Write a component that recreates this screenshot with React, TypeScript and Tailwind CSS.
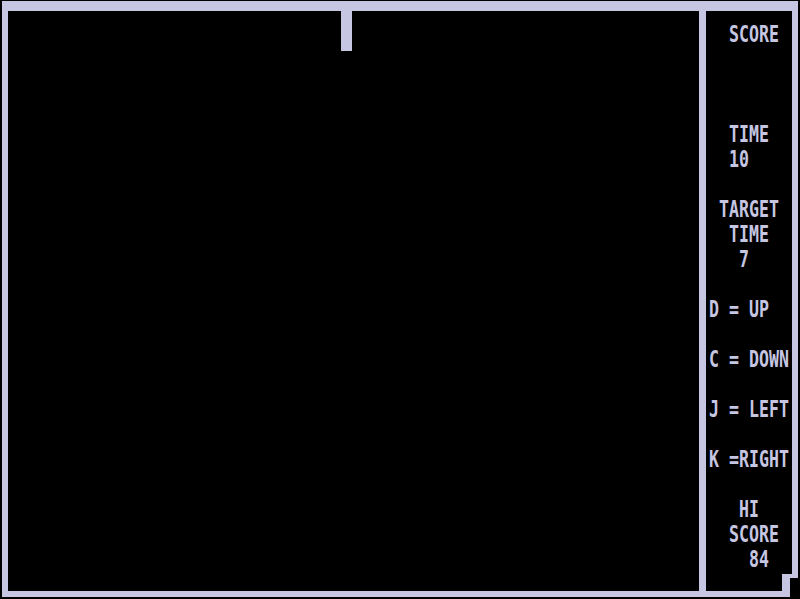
const INK = "bg-[#c6c6e2]";

// sidebar rows, index = text row (25px each), text starts at column 71
const SIDEBAR_ROWS: Record<number, string> = {
	1: "  SCORE",
	5: "  TIME",
	6: "  10",
	8: " TARGET",
	9: "  TIME",
	10: "   7",
	12: "D = UP",
	14: "C = DOWN",
	16: "J = LEFT",
	18: "K =RIGHT",
	20: "   HI",
	21: "  SCORE",
	22: "    84",
};

function Sidebar() {
	const rows = Array.from({ length: 22 }, (_, i) => SIDEBAR_ROWS[i + 1] ?? "");

	return (
		<div className="flex w-[92px] flex-col">
			<div className="flex flex-1">
				<div
					className="w-[86px] pl-[3px] pt-[13px] text-[16.6px] font-bold text-[#c6c6e2]"
					style={{ fontFamily: '"DejaVu Sans Mono", "Liberation Mono", monospace' }}
				>
					{rows.map((line, i) => (
						<div key={i} className="h-[25px] origin-top scale-y-[1.4] whitespace-pre leading-none">
							{line}
						</div>
					))}
				</div>
				<div className={`w-[6px] ${INK}`} />
			</div>

			{/* step in the bottom right corner */}
			<div className="flex h-[6px]">
				<div className="w-[76px]" />
				<div className={`w-[16px] ${INK}`} />
			</div>
			<div className="flex h-[17px]">
				<div className="w-[76px]" />
				<div className={`w-[8px] ${INK}`} />
			</div>
		</div>
	);
}

export default function App() {
	return (
		<div className="flex h-[599px] w-[800px] flex-col items-start overflow-hidden bg-black pl-[2px] pt-[1px]">
			<div className={`h-[10px] w-[796px] ${INK}`} />

			<div className="flex h-[580px]">
				<div className={`w-[6px] ${INK}`} />

				{/* play field */}
				<div className="flex w-[691px] flex-col">
					<div className={`ml-[333px] h-[40px] w-[11px] ${INK}`} />
				</div>

				<div className={`w-[7px] ${INK}`} />

				<Sidebar />
			</div>

			<div className={`h-[6px] w-[788px] ${INK}`} />
		</div>
	);
}
